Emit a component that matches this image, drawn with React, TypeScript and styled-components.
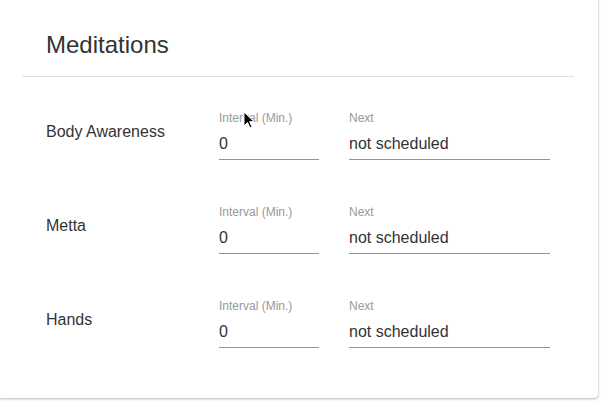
import React from "react";
import styled, { createGlobalStyle } from "styled-components";

const Global = createGlobalStyle`
  html, body { margin: 0; padding: 0; background: #fff; overflow: hidden; }
  body { font-family: "Liberation Sans", Arial, sans-serif; color: #333; }
`;

const Page = styled.div`
  position: relative;
  width: 614px;
  height: 414px;
  overflow: hidden;
`;

const Card = styled.section`
  margin: -20px 0 0 -2px;
  width: 600px;
  background: #fff;
  border-radius: 4px;
  box-shadow: 0 1px 3px rgba(0, 0, 0, 0.28), 0 0 1px rgba(0, 0, 0, 0.18);
  padding-bottom: 50px;
`;

const Header = styled.header`
  margin: 0 24px;
  padding: 49px 0 15px 24px;
  border-bottom: 1px solid #e0e0e0;
`;

const Title = styled.h2`
  margin: 0;
  font-size: 24px;
  line-height: 32px;
  font-weight: 400;
  color: #333;
`;

const List = styled.div`
  display: flex;
  flex-direction: column;
  gap: 44px;
  padding: 33px 0 0 48px;
`;

const Row = styled.div`
  display: flex;
  align-items: flex-start;
`;

const Name = styled.div`
  width: 173px;
  margin-top: 10px;
  font-size: 16px;
  line-height: 24px;
  color: #333;
`;

const Field = styled.label<{ $w: number }>`
  display: flex;
  flex-direction: column;
  width: ${(p) => p.$w}px;
  margin-right: 30px;
  border-bottom: 1px solid #949494;
`;

const FieldLabel = styled.span`
  font-size: 12px;
  line-height: 16px;
  color: #999;
  margin-bottom: 6px;
`;

const Input = styled.input`
  border: 0;
  outline: none;
  padding: 0 0 3px;
  margin: 0;
  height: 24px;
  box-sizing: content-box;
  font-family: "Liberation Sans", Arial, sans-serif;
  font-size: 16px;
  line-height: 24px;
  color: #333;
  background: transparent;
  width: 100%;
`;

const Cursor = styled.svg`
  position: absolute;
  left: 243px;
  top: 111px;
  pointer-events: none;
`;

const items = ["Body Awareness", "Metta", "Hands"];

export default function App() {
  return (
    <Page>
      <Global />
      <Card>
        <Header>
          <Title>Meditations</Title>
        </Header>
        <List>
          {items.map((name) => (
            <Row key={name}>
              <Name>{name}</Name>
              <Field $w={100}>
                <FieldLabel>Interval (Min.)</FieldLabel>
                <Input readOnly value="0" />
              </Field>
              <Field $w={201}>
                <FieldLabel>Next</FieldLabel>
                <Input readOnly value="not scheduled" />
              </Field>
            </Row>
          ))}
        </List>
      </Card>
      <Cursor width="12" height="19" viewBox="0 0 12 19">
        <path
          d="M1 1 L1 15 L4.5 11.5 L7 17 L9 16 L6.6 10.6 L11 10.6 Z"
          fill="#000"
          stroke="#fff"
          strokeWidth="1"
          strokeLinejoin="round"
        />
      </Cursor>
    </Page>
  );
}
